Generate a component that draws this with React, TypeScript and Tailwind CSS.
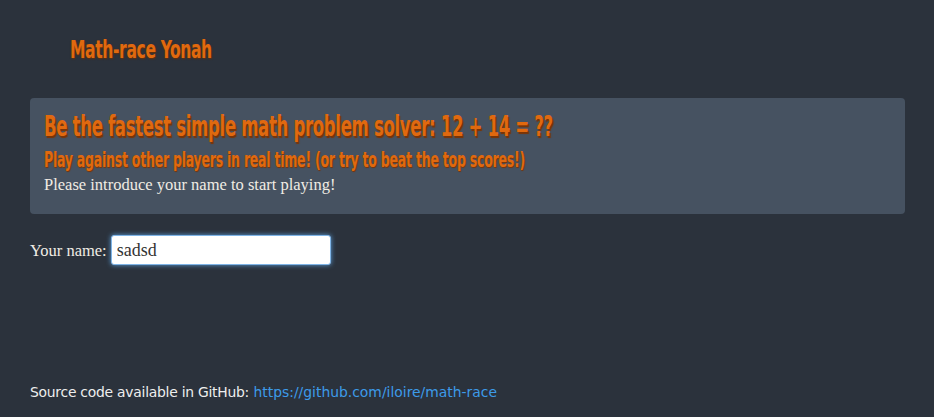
import React from "react";

const condensed = {
  fontFamily: "'DejaVu Sans Condensed', 'Liberation Sans', sans-serif",
};

export default function App() {
  return (
    <div className="min-h-[417px] w-full bg-[#2b323c] pl-[30px] pr-[29px] pt-[35px] pb-[14px] flex flex-col">
      {/* Header */}
      <div className="pl-[40px]">
        <h1
          style={condensed}
          className="inline-block origin-left scale-x-[0.72] whitespace-nowrap text-[24px] leading-[30px] font-bold tracking-[-0.5px] text-[#e0690f] [text-shadow:1px_1px_2px_#6b2e05]"
        >
          Math-race Yonah
        </h1>
      </div>

      {/* Intro panel */}
      <div className="mt-[33px] rounded-[4px] bg-[#465261] px-[14px] pt-[12px] pb-[19px]">
        <h2
          style={condensed}
          className="block origin-left scale-x-[0.657] whitespace-nowrap text-[28px] leading-[33px] font-bold tracking-[-0.5px] text-[#e0690f] [text-shadow:2px_2px_1px_#7a3406]"
        >
          Be the fastest simple math problem solver: 12 + 14 = ??
        </h2>
        <h3
          style={condensed}
          className="mt-[5px] block origin-left scale-x-[0.666] whitespace-nowrap text-[21px] leading-[24px] font-bold tracking-[-0.4px] text-[#e0690f] [text-shadow:1px_1px_1px_#7a3406]"
        >
          Play against other players in real time! (or try to beat the top scores!)
        </h3>
        <p className="mt-[2px] font-['Liberation_Serif',serif] text-[16.5px] leading-[21px] text-[#f0ece4]">
          Please introduce your name to start playing!
        </p>
      </div>

      {/* Name form */}
      <div className="mt-[21px] flex items-center gap-[4px]">
        <label className="font-['Liberation_Serif',serif] text-[16.5px] text-[#f0ece4] mt-[2px]">
          Your name:
        </label>
        <input
          defaultValue="sadsd"
          className="h-[30px] w-[220px] rounded-[3px] border border-[#7fb4e6] bg-white px-[5px] font-['Liberation_Serif',serif] text-[18px] text-[#333] shadow-[0_0_5px_#5b9dd9] outline-none"
        />
      </div>

      {/* Footer */}
      <p className="mt-auto font-['DejaVu_Sans',sans-serif] text-[13.9px] text-[#eee]">
        <span className="tracking-[-0.25px]">Source code available in GitHub:</span>{" "}
        <a href="#" className="text-[#3d9be9]">
          https://github.com/iloire/math-race
        </a>
      </p>
    </div>
  );
}
